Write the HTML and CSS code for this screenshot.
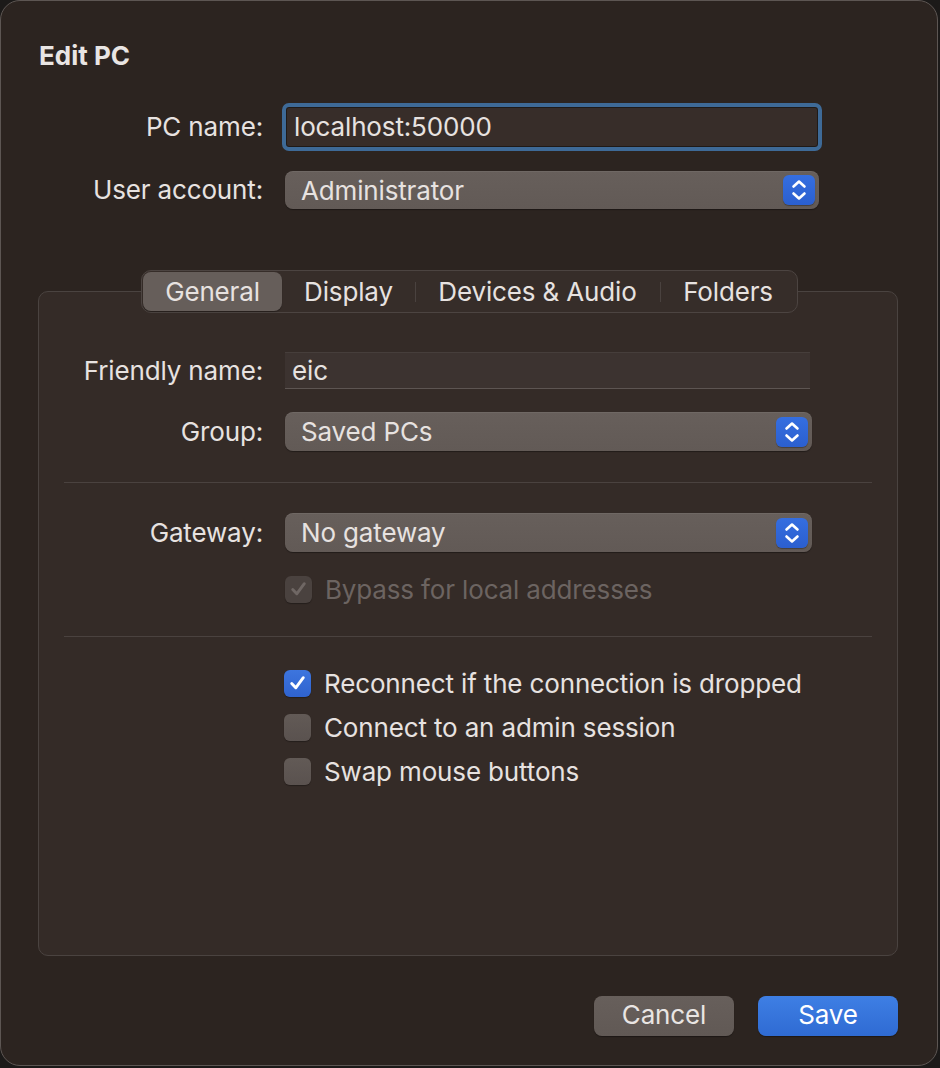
FILE: index.html
```html
<!DOCTYPE html>
<html lang="en">
<head>
<meta charset="utf-8">
<title>Edit PC</title>
<link rel="stylesheet" href="styles.css">
</head>
<body>
<div class="window">
  <h1 class="title">Edit PC</h1>

  <div class="form top-form">
    <label class="label">PC name:</label>
    <div class="textfield focused">localhost:50000</div>

    <label class="label">User account:</label>
    <div class="popup wide">
      <span>Administrator</span>
      <span class="stepper"><svg viewBox="0 0 32 28" width="32" height="28"><path d="M10.5 10.5 L16 5.5 L21.5 10.5 M10.5 17.5 L16 22.5 L21.5 17.5" fill="none" stroke="#fff" stroke-width="2.6" stroke-linecap="round" stroke-linejoin="round"/></svg></span>
    </div>
  </div>

  <div class="tabs">
    <div class="tab selected" style="width:139px">General</div>
    <div class="tab" style="width:133px">Display</div>
    <div class="tab sep" style="width:245px">Devices &amp; Audio</div>
    <div class="tab sep" style="width:136px">Folders</div>
  </div>

  <div class="groupbox">
    <div class="form">
      <label class="label">Friendly name:</label>
      <div class="textfield plain">eic</div>

      <label class="label">Group:</label>
      <div class="popup">
        <span>Saved PCs</span>
        <span class="stepper"><svg viewBox="0 0 32 28" width="32" height="28"><path d="M10.5 10.5 L16 5.5 L21.5 10.5 M10.5 17.5 L16 22.5 L21.5 17.5" fill="none" stroke="#fff" stroke-width="2.6" stroke-linecap="round" stroke-linejoin="round"/></svg></span>
      </div>
    </div>

    <div class="separator sep-a"></div>

    <div class="form">
      <label class="label">Gateway:</label>
      <div class="popup">
        <span>No gateway</span>
        <span class="stepper"><svg viewBox="0 0 32 28" width="32" height="28"><path d="M10.5 10.5 L16 5.5 L21.5 10.5 M10.5 17.5 L16 22.5 L21.5 17.5" fill="none" stroke="#fff" stroke-width="2.6" stroke-linecap="round" stroke-linejoin="round"/></svg></span>
      </div>
      <span></span>
      <div class="check disabled">
        <span class="box on"><svg viewBox="0 0 28 28" width="28" height="28"><path d="M8 14.5 L12.2 19 L20 8.5" fill="none" stroke="#6f6764" stroke-width="3" stroke-linecap="round" stroke-linejoin="round"/></svg></span>
        <span>Bypass for local addresses</span>
      </div>
    </div>

    <div class="separator sep-b"></div>

    <div class="checks">
      <div class="check">
        <span class="box checked"><svg viewBox="0 0 28 28" width="28" height="28"><path d="M8 14.5 L12.2 19 L20 8.5" fill="none" stroke="#fff" stroke-width="3" stroke-linecap="round" stroke-linejoin="round"/></svg></span>
        <span>Reconnect if the connection is dropped</span>
      </div>
      <div class="check">
        <span class="box"></span>
        <span>Connect to an admin session</span>
      </div>
      <div class="check">
        <span class="box"></span>
        <span>Swap mouse buttons</span>
      </div>
    </div>
  </div>

  <div class="buttons">
    <button class="btn cancel">Cancel</button>
    <button class="btn save">Save</button>
  </div>
</div>
</body>
</html>
```

FILE: styles.css
```css
* { box-sizing: border-box; }

html, body {
  margin: 0;
  padding: 0;
  background: #1c1a19;
}

body {
  width: 940px;
  height: 1068px;
  font-family: Inter, "Liberation Sans", sans-serif;
  font-size: 26px;
  letter-spacing: -0.15px;
  color: #e7e2e0;
}

.window {
  width: 938px;
  height: 1066px;
  border: 1px solid #5d5653;
  border-radius: 20px;
  background: #2c2420;
  padding: 40px 38px 0 37px;
  display: flex;
  flex-direction: column;
}

.title {
  margin: 0;
  font-size: 26px;
  line-height: 30px;
  font-weight: 700;
  color: #e9e5e3;
  padding-left: 1px;
  letter-spacing: 0;
}

.form {
  display: grid;
  grid-template-columns: 224px 527px;
  column-gap: 22px;
  row-gap: 23px;
  align-items: center;
}

.top-form {
  margin-top: 36px;
  grid-template-columns: 225px 534px;
  column-gap: 22px;
  row-gap: 24px;
}

.label {
  text-align: right;
  line-height: 30px;
  white-space: nowrap;
}

.textfield {
  height: 40px;
  line-height: 40px;
  padding-left: 7px;
  white-space: nowrap;
}

.textfield.focused {
  background: #372d29;
  outline: 4px solid #3e6a97;
  outline-offset: 0;
  border-radius: 3px;
  border: 1px solid #1f1a18;
  line-height: 38px;
  margin-left: 1px;
  width: 532px;
}

.textfield.plain {
  height: 37px;
  line-height: 36px;
  background: #3c3330;
  border-top: 1px solid #463e3b;
  border-bottom: 1px solid #5d5552;
  width: 525px;
}

.popup {
  height: 39px;
  background: linear-gradient(#675f5b, #625a56);
  border-radius: 8px;
  box-shadow: 0 1px 1px rgba(0,0,0,0.35), inset 0 1px 0 rgba(255,255,255,0.06);
  display: flex;
  align-items: center;
  justify-content: space-between;
  padding: 0 4px 0 16px;
  white-space: nowrap;
}

.popup.wide {
  height: 38px;
}

.stepper {
  width: 32px;
  height: 30px;
  border-radius: 6px;
  background: linear-gradient(#356ee0, #2b5fcf);
  display: flex;
  align-items: center;
  justify-content: center;
  box-shadow: 0 1px 1px rgba(0,0,0,0.3);
}

.stepper svg { display: block; }

.tabs {
  margin-top: 61px;
  align-self: center;
  margin-left: 2px;
  display: flex;
  height: 43px;
  padding: 1px;
  background: #362d29;
  border: 1px solid #4c4441;
  border-radius: 10px;
  position: relative;
  z-index: 1;
  margin-bottom: -22px;
}

.tab {
  height: 39px;
  line-height: 39px;
  text-align: center;
  position: relative;
  color: #e7e2e0;
  white-space: nowrap;
}

.tab.selected {
  background: #665e5a;
  border-radius: 8px;
  box-shadow: 0 1px 1px rgba(0,0,0,0.3);
}

.tab.sep::before {
  content: "";
  position: absolute;
  left: 0;
  top: 10px;
  height: 20px;
  width: 1px;
  background: #4a423f;
}

.groupbox {
  width: 860px;
  height: 665px;
  background: #342b27;
  border: 1px solid #4a4340;
  border-radius: 10px;
  padding-top: 60px;
}

.separator {
  height: 1px;
  background: #4a423f;
  margin: 0 25px;
}

.sep-a { margin-top: 31px; margin-bottom: 30px; }
.sep-b { margin-top: 33px; margin-bottom: 32px; }

.check {
  display: flex;
  align-items: center;
  gap: 13px;
  height: 28px;
  white-space: nowrap;
}

.check.disabled { color: #6c6461; }

.box {
  width: 27px;
  height: 27px;
  border-radius: 6px;
  background: linear-gradient(#625a56, #5a524f);
  box-shadow: 0 1px 1px rgba(0,0,0,0.3);
  flex: none;
  display: flex;
  align-items: center;
  justify-content: center;
}

.box svg { display: block; }

.box.checked {
  background: linear-gradient(#3d75de, #2f63cf);
}

.box.on {
  background: #4a423f;
}

.checks {
  display: flex;
  flex-direction: column;
  gap: 16px;
  padding-left: 245px;
}

.buttons {
  display: flex;
  justify-content: flex-end;
  gap: 24px;
  margin-top: 40px;
  width: 860px;
}

.btn {
  width: 140px;
  height: 40px;
  border: none;
  border-radius: 8px;
  font-family: inherit;
  font-size: 26px;
  line-height: 38px;
  letter-spacing: -0.15px;
  color: #e9e5e3;
  padding: 0 0 2px;
  box-shadow: 0 1px 1px rgba(0,0,0,0.35);
}

.btn.cancel {
  background: linear-gradient(#675f5b, #615955);
}

.btn.save {
  background: linear-gradient(#3e7fe4, #2f6bd3);
  color: #fff;
}
```
